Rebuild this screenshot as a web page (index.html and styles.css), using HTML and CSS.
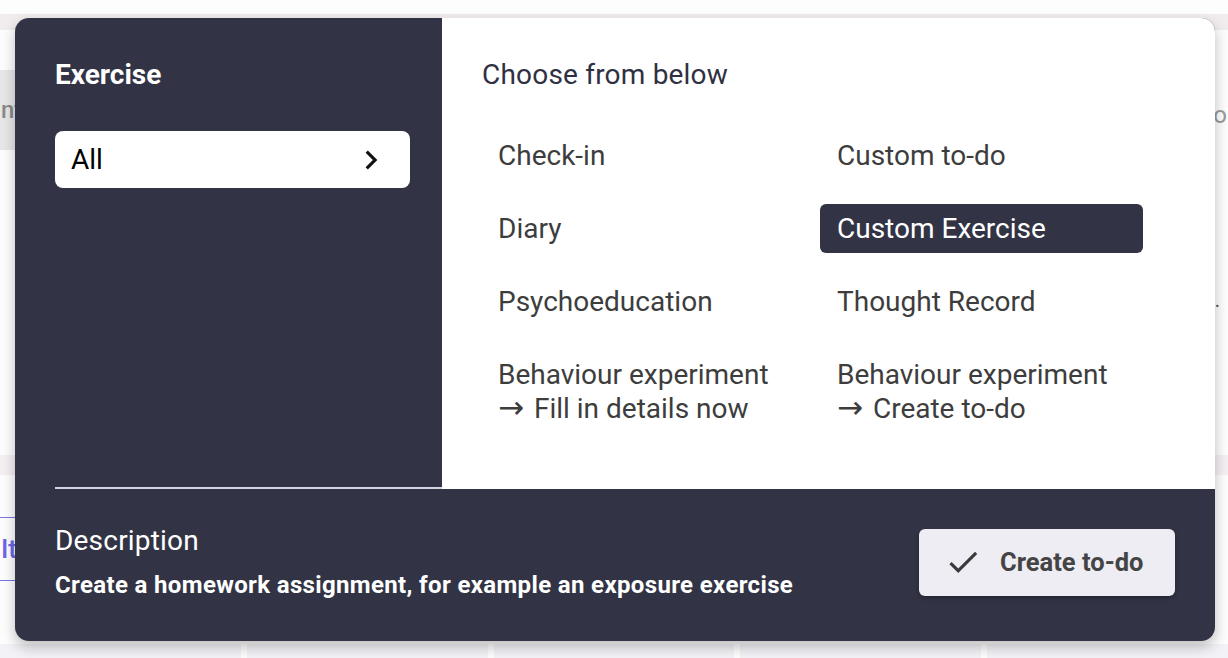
FILE: index.html
```html
<!DOCTYPE html>
<html>
<head>
<meta charset="utf-8">
<link rel="stylesheet" href="styles.css">
</head>
<body>
<div class="page">
  <div class="topstrip"></div>
  <div class="bg-row">
    <div class="bg-chip">nt</div>
    <div class="bg-right-text">go</div>
  </div>
  <div class="bg-dot-row"><span class="bg-dot">.</span></div>
  <div class="bg-band"></div>
  <div class="bg-tab">It</div>
  <div class="bg-cells">
    <span></span><span></span><span></span><span></span><span></span>
  </div>
</div>

<div class="modal">
  <div class="modal-top">
    <aside class="side">
      <h2 class="side-title">Exercise</h2>
      <button class="cat">
        <span>All</span>
        <svg class="chev" viewBox="0 0 24 24" width="38" height="38"><path d="M10 6L8.59 7.41 13.17 12l-4.58 4.59L10 18l6-6z" fill="#111"/></svg>
      </button>
      <div class="side-fill"></div>
      <div class="side-rule"></div>
    </aside>
    <section class="choices">
      <h2 class="choices-title">Choose from below</h2>
      <div class="grid">
        <div class="item">Check-in</div>
        <div class="item">Custom to-do</div>
        <div class="item">Diary</div>
        <div class="item selected">Custom Exercise</div>
        <div class="item">Psychoeducation</div>
        <div class="item">Thought Record</div>
        <div class="item">Behaviour experiment<br><span class="arrow">&#8594;</span> Fill in details now</div>
        <div class="item">Behaviour experiment<br><span class="arrow">&#8594;</span> Create to-do</div>
      </div>
    </section>
  </div>
  <div class="modal-bottom">
    <div class="desc">
      <div class="desc-title">Description</div>
      <div class="desc-text">Create a homework assignment, for example an exposure exercise</div>
    </div>
    <button class="create">
      <svg viewBox="0 0 24 24" width="38" height="38"><path d="M9 16.17L4.83 12l-1.42 1.41L9 19 21 7l-1.41-1.41z" fill="#3a3a3a"/></svg>
      <span>Create to-do</span>
    </button>
  </div>
</div>
</body>
</html>
```

FILE: styles.css
```css
* { box-sizing: border-box; }
html, body { margin: 0; padding: 0; }
body {
  width: 1228px;
  height: 658px;
  overflow: hidden;
  background: #fdfdfd;
  font-family: Roboto, "Liberation Sans", sans-serif;
  position: relative;
}

/* background page (dimmed, behind the modal) */
.page {
  display: flex;
  flex-direction: column;
  height: 658px;
}
.topstrip {
  margin-top: 14px;
  height: 16px;
  background: #f1eced;
}
.bg-row {
  display: flex;
  justify-content: space-between;
  margin-top: 40px;
  height: 80px;
}
.bg-chip {
  background: #e7e7e7;
  height: 80px;
  width: 60px;
  padding-left: 1px;
  display: flex;
  align-items: center;
  color: #8a8a8a;
  font-size: 24px;
  font-weight: 500;
}
.bg-right-text {
  color: #9a9a9a;
  font-size: 24px;
  margin-top: 30px;
  margin-right: 1px;
  line-height: 30px;
}
.bg-dot-row {
  margin-top: 120px;
  height: 60px;
  display: flex;
  justify-content: flex-end;
  padding-right: 8px;
  align-items: center;
  color: #555;
  font-size: 20px;
}
.bg-band {
  margin-top: 125px;
  height: 20px;
  background: #f4eff3;
}
.bg-tab {
  margin-top: 42px;
  height: 64px;
  width: 60px;
  padding-left: 1px;
  border-top: 1.5px solid #7b74e8;
  border-bottom: 1.5px solid #7b74e8;
  color: #6d66e6;
  font-size: 26px;
  font-weight: 500;
  display: flex;
  align-items: center;
}
.bg-cells {
  margin-top: auto;
  height: 14px;
  display: flex;
  gap: 6px;
}
.bg-cells span {
  flex: 1;
  background: #f3f3f7;
}

/* modal */
.modal {
  position: absolute;
  left: 15px;
  top: 18px;
  width: 1200px;
  height: 623px;
  border-radius: 14px;
  background: #323445;
  overflow: hidden;
  display: flex;
  flex-direction: column;
  box-shadow: 0 6px 14px rgba(0, 0, 0, 0.25);
}
.modal-top {
  display: flex;
  height: 471px;
}
.side {
  width: 427px;
  display: flex;
  flex-direction: column;
  padding: 40px 32px 0 40px;
}
.side-title {
  margin: 0;
  color: #fff;
  font-size: 28px;
  font-weight: 700;
  line-height: 34px;
}
.cat {
  margin-top: 39px;
  height: 57px;
  border: 0;
  border-radius: 8px;
  background: #fff;
  display: flex;
  align-items: center;
  justify-content: space-between;
  padding: 0 20px 0 16px;
  font-family: inherit;
  font-size: 28px;
  color: #000;
}
.chev { display: block; }
.side-fill { flex: 1; }
.side-rule {
  height: 2px;
  background: #d3d3e2;
  margin-right: -32px;
}
.choices {
  flex: 1;
  background: #fff;
  padding: 40px 40px 0 39px;
  height: 471px;
}
.choices-title {
  margin: 0 0 0 1px;
  font-size: 28px;
  font-weight: 400;
  letter-spacing: 0.2px;
  color: #2f3142;
  line-height: 34px;
}
.grid {
  margin-top: 39px;
  display: grid;
  grid-template-columns: 323px 323px;
  column-gap: 16px;
  row-gap: 24px;
}
.item {
  padding: 7.5px 17px;
  font-size: 28px;
  line-height: 34px;
  color: #3d3d3d;
  border-radius: 6px;
  white-space: nowrap;
}
.arrow {
  font-family: "DejaVu Sans", sans-serif;
  font-size: 31px;
  font-weight: 400;
  line-height: 0;
  margin-right: 3px;
}
.item.selected {
  background: #323445;
  color: #fff;
}

.modal-bottom {
  flex: 1;
  display: flex;
  align-items: center;
  justify-content: space-between;
  padding: 0 40px 0 40px;
}
.desc { margin-top: -7px; }
.desc-title {
  color: #fff;
  font-size: 28px;
  letter-spacing: 0.2px;
  line-height: 34px;
}
.desc-text {
  color: #fff;
  font-size: 24px;
  font-weight: 700;
  letter-spacing: 0.35px;
  line-height: 30px;
  margin-top: 12px;
}
.create {
  width: 256px;
  height: 67px;
  border: 0;
  border-radius: 6px;
  background: #eeedf3;
  box-shadow: 0 2px 4px rgba(0,0,0,0.3);
  display: flex;
  align-items: center;
  padding: 0 0 0 25px;
  gap: 18px;
  font-family: inherit;
  font-size: 25.5px;
  font-weight: 700;
  color: #444;
  margin-top: -6px;
}
.create svg { display: block; }
```
